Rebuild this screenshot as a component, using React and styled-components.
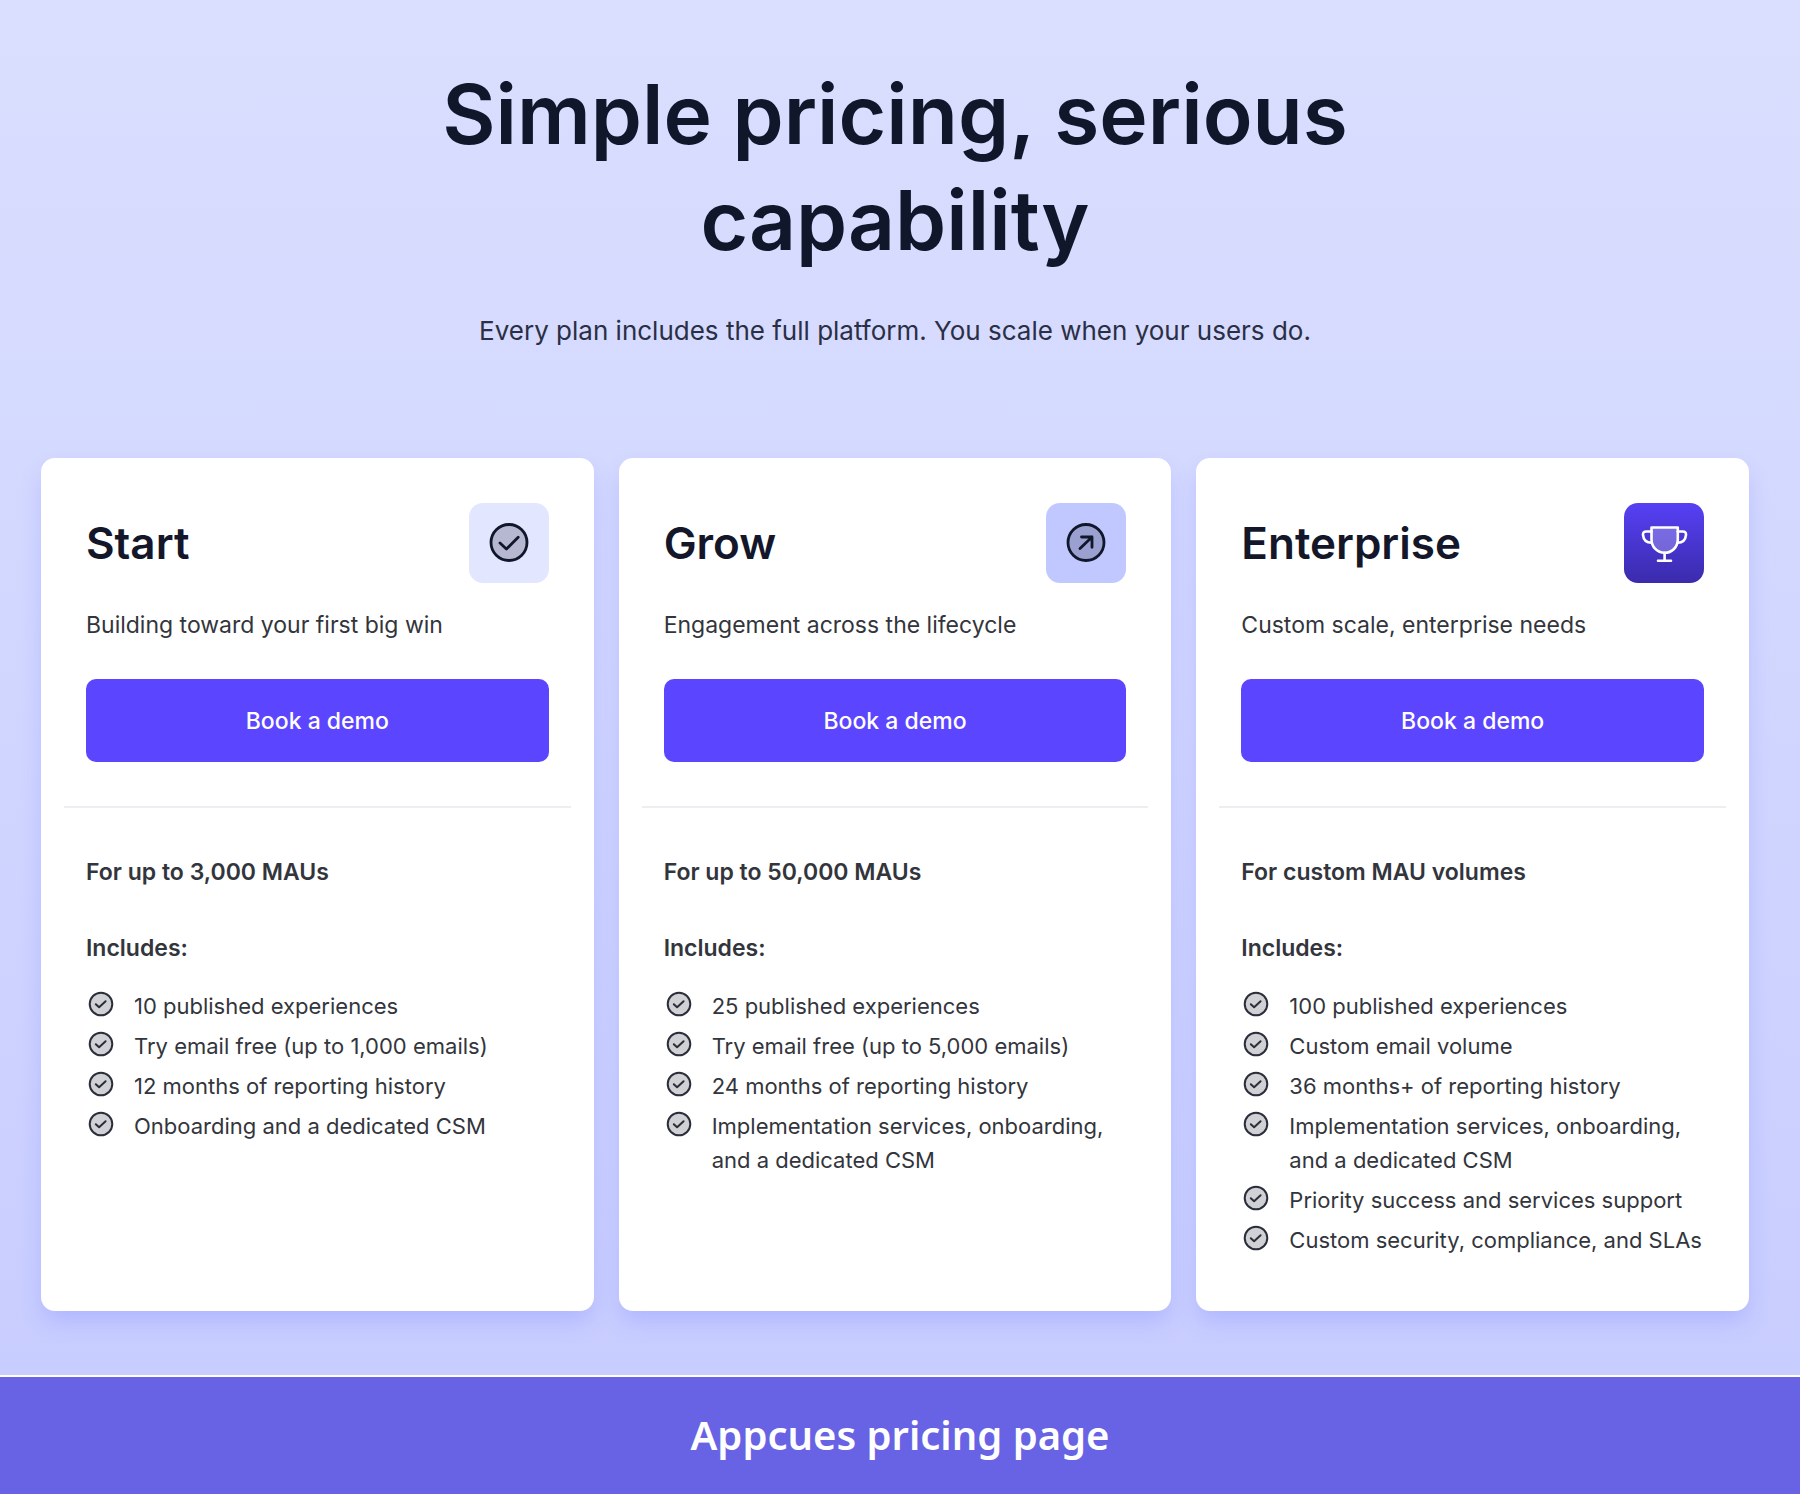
import React from "react";
import styled, { createGlobalStyle } from "styled-components";

const GlobalStyle = createGlobalStyle`
  * {
    box-sizing: border-box;
  }
  body {
    margin: 0;
    font-family: Inter, "Liberation Sans", sans-serif;
    color: #33353c;
  }
`;

const Page = styled.div`
  display: flex;
  flex-direction: column;
  min-height: 100vh;
`;

const Pricing = styled.main`
  flex: 1;
  padding: 62px 51px 64px 41px;
  background: linear-gradient(#dadfff, #c8cdff);
`;

const Intro = styled.header`
  display: flex;
  flex-direction: column;
  align-items: center;
  gap: 38px;
  padding-bottom: 108px;
  text-align: center;
`;

const Heading = styled.h1`
  max-width: 1100px;
  margin: 0;
  font-size: 82px;
  line-height: 106px;
  font-weight: 600;
  color: #10172a;
`;

const Lead = styled.p`
  margin: 0;
  font-size: 26px;
  line-height: 38px;
  color: #2b2f44;
`;

const Plans = styled.div`
  display: grid;
  grid-template-columns: repeat(3, 1fr);
  gap: 25px;
`;

const Card = styled.article`
  display: flex;
  flex-direction: column;
  padding: 45px 45px 54px;
  border-radius: 14px;
  background: #fff;
  box-shadow: 0 12px 22px -2px rgba(91, 98, 255, 0.22);
`;

const CardHead = styled.div`
  display: flex;
  align-items: center;
  justify-content: space-between;
`;

const PlanName = styled.h2`
  margin: 0;
  font-size: 44px;
  line-height: 56px;
  font-weight: 600;
  color: #14172a;
`;

const Tile = styled.div`
  display: flex;
  align-items: center;
  justify-content: center;
  width: 80px;
  height: 80px;
  border-radius: 14px;
  background: ${props => props.$fill};
`;

const Summary = styled.p`
  margin: 24px 0 36px;
  font-size: 23px;
  line-height: 36px;
`;

const Button = styled.button`
  height: 83px;
  border: 0;
  border-radius: 10px;
  background: #5b45ff;
  color: #fff;
  font: 500 23px/36px Inter, "Liberation Sans", sans-serif;
  cursor: pointer;
`;

const Divider = styled.hr`
  align-self: stretch;
  height: 2px;
  margin: 44px -22px 46px;
  border: 0;
  background: #eeeef2;
`;

const Label = styled.p`
  margin: 0 0 40px;
  font-size: 23px;
  line-height: 36px;
  font-weight: 600;
`;

const ListLabel = styled(Label)`
  margin-bottom: 23px;
`;

const Features = styled.ul`
  display: flex;
  flex-direction: column;
  gap: 6px;
  margin: 0;
  padding: 0;
  list-style: none;
`;

const Feature = styled.li`
  display: flex;
  gap: 18px;
  font-size: 22px;
  line-height: 34px;

  > svg {
    flex: none;
  }
`;

const Caption = styled.footer`
  padding: 32px 24px 33px;
  border-top: 2px solid #fff;
  background: #6763e4;
  color: #fff;
  font-family: "Noto Sans", "Open Sans", sans-serif;
  font-size: 40px;
  line-height: 52px;
  font-weight: 600;
  text-align: center;
`;

const CheckIcon = () => (
  <svg width="40" height="40" viewBox="0 0 40 40" fill="none" stroke="#10172a" strokeWidth="2.8" strokeLinecap="round" strokeLinejoin="round">
    <circle cx="20" cy="19.5" r="18" fill="#10172a" fillOpacity="0.22" />
    <path d="M11 20 17.4 26 29.2 14.3" />
  </svg>
);

const ArrowIcon = () => (
  <svg width="40" height="40" viewBox="0 0 40 40" fill="none" stroke="#10172a" strokeWidth="2.8" strokeLinecap="round" strokeLinejoin="round">
    <circle cx="20" cy="19.5" r="18" fill="#10172a" fillOpacity="0.22" />
    <path d="M14 25.5 26 14M15.5 14H26V24.3" />
  </svg>
);

const TrophyIcon = () => (
  <svg width="48" height="48" viewBox="0 0 48 48" fill="none" stroke="#fff" strokeWidth="2.6" strokeLinecap="round" strokeLinejoin="round">
    <path d="M11.5 8.5H37.8V20.5C37.8 28 32 33.8 24.6 33.8S11.5 28 11.5 20.5Z" fill="#fff" fillOpacity="0.25" />
    <path d="M11.5 12.5H6C4 12.5 2.8 13.8 3 15.8 3.4 20.6 6.4 23.6 11.8 23.8M37.8 12.5H43C45 12.5 46.2 13.8 46 15.8 45.6 20.6 42.6 23.6 37.5 23.8" />
    <path d="M24.6 33.8V41.8M18 41.8H31" />
  </svg>
);

const BulletIcon = () => (
  <svg width="30" height="30" viewBox="0 0 30 30" fill="none" stroke="#2a2e3a" strokeWidth="2" strokeLinecap="round" strokeLinejoin="round" aria-hidden="true">
    <circle cx="15" cy="15" r="11.3" fill="#2a2e3a" fillOpacity="0.22" />
    <path d="M9.8 15.2 13.1 18.2 19.6 12.2" />
  </svg>
);

const plans = [
  {
    name: "Start",
    fill: "#e3e6ff",
    icon: <CheckIcon />,
    summary: "Building toward your first big win",
    volume: "For up to 3,000 MAUs",
    features: [
      "10 published experiences",
      "Try email free (up to 1,000 emails)",
      "12 months of reporting history",
      "Onboarding and a dedicated CSM"
    ]
  },
  {
    name: "Grow",
    fill: "#c1c8ff",
    icon: <ArrowIcon />,
    summary: "Engagement across the lifecycle",
    volume: "For up to 50,000 MAUs",
    features: [
      "25 published experiences",
      "Try email free (up to 5,000 emails)",
      "24 months of reporting history",
      "Implementation services, onboarding, and a dedicated CSM"
    ]
  },
  {
    name: "Enterprise",
    fill: "linear-gradient(#5640f5, #3b2bac)",
    icon: <TrophyIcon />,
    summary: "Custom scale, enterprise needs",
    volume: "For custom MAU volumes",
    features: [
      "100 published experiences",
      "Custom email volume",
      "36 months+ of reporting history",
      "Implementation services, onboarding, and a dedicated CSM",
      "Priority success and services support",
      "Custom security, compliance, and SLAs"
    ]
  }
];

const Plan = ({ plan }) => (
  <Card>
    <CardHead>
      <PlanName>{plan.name}</PlanName>
      <Tile $fill={plan.fill}>{plan.icon}</Tile>
    </CardHead>
    <Summary>{plan.summary}</Summary>
    <Button type="button">Book a demo</Button>
    <Divider />
    <Label>{plan.volume}</Label>
    <ListLabel>Includes:</ListLabel>
    <Features>
      {plan.features.map(feature => (
        <Feature key={feature}>
          <BulletIcon />
          <span>{feature}</span>
        </Feature>
      ))}
    </Features>
  </Card>
);

const App = () => (
  <Page>
    <GlobalStyle />
    <Pricing>
      <Intro>
        <Heading>Simple pricing, serious capability</Heading>
        <Lead>Every plan includes the full platform. You scale when your users do.</Lead>
      </Intro>
      <Plans>
        {plans.map(plan => (
          <Plan key={plan.name} plan={plan} />
        ))}
      </Plans>
    </Pricing>
    <Caption>Appcues pricing page</Caption>
  </Page>
);

export default App;
